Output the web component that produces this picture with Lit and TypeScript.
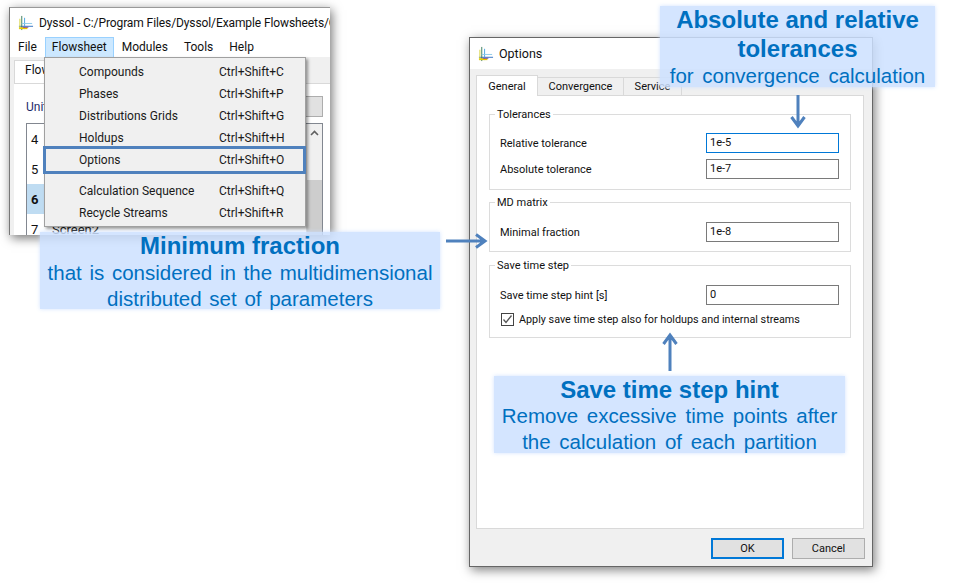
import { LitElement, css, html, svg } from 'lit';
import { customElement } from 'lit/decorators.js';

const appIcon = svg`
  <line x1="1" y1="12" x2="16" y2="12" stroke="#2f6fc0" stroke-width="1"/>
  <line x1="4" y1="1" x2="4" y2="16" stroke="#3a7d5c" stroke-width="1"/>
  <line x1="7" y1="3" x2="7" y2="15" stroke="#4aa3df" stroke-width="1"/>
  <line x1="1" y1="14" x2="10" y2="14" stroke="#e8c800" stroke-width="2"/>
  <line x1="2" y1="4" x2="2" y2="15" stroke="#d8d23a" stroke-width="1"/>
  <line x1="4" y1="9" x2="15" y2="9" stroke="#8ccbe8" stroke-width="1"/>
  <line x1="5" y1="13" x2="11" y2="13" stroke="#7b3fa0" stroke-width="1"/>
`;

const menuItems = [
  { label: 'Compounds', keys: 'Ctrl+Shift+C' },
  { label: 'Phases', keys: 'Ctrl+Shift+P' },
  { label: 'Distributions Grids', keys: 'Ctrl+Shift+G' },
  { label: 'Holdups', keys: 'Ctrl+Shift+H' },
  { label: 'Options', keys: 'Ctrl+Shift+O', marked: true },
  null,
  { label: 'Calculation Sequence', keys: 'Ctrl+Shift+Q' },
  { label: 'Recycle Streams', keys: 'Ctrl+Shift+R' },
];

const rows = [
  { n: '4', text: '' },
  { n: '5', text: '' },
  { n: '6', text: '', active: true },
  { n: '7', text: 'Screen2' },
];

@customElement('main-window')
export class MainWindow extends LitElement {
  static override styles = css`
    :host {
      display: block;
      width: 321px;
      height: 228px;
      background: #fff;
      border-left: 1px solid #777;
      border-top: 1px solid #999;
      box-sizing: border-box;
      box-shadow: 2px 3px 10px rgba(0, 0, 0, 0.55);
      overflow: hidden;
      position: relative;
      font: 12px Roboto, sans-serif;
      color: #111;
    }
    .title {
      height: 29px;
      display: flex;
      align-items: center;
      gap: 5px;
      padding-left: 8px;
      white-space: nowrap;
      overflow: hidden;
      letter-spacing: -0.1px;
    }
    .title svg { flex: none; }
    .menubar {
      display: flex;
      height: 20px;
      align-items: stretch;
      line-height: 20px;
    }
    .menubar span { padding: 0 8px; }
    .menubar .open {
      background: #cce8ff;
      border: 1px solid #99d1ff;
      border-bottom: none;
      padding: 0 6px;
      line-height: 18px;
    }
    .body {
      background: #f0f0f0;
      height: 178px;
      padding: 3px 0 0 4px;
    }
    .tab {
      width: 60px;
      height: 23px;
      background: #fff;
      border: 1px solid #d9d9d9;
      border-bottom: none;
      box-sizing: border-box;
      padding: 2px 0 0 10px;
    }
    .pane {
      background: #fff;
      border-top: 1px solid #d9d9d9;
      height: 160px;
      padding: 12px 7px 0 12px;
      box-sizing: border-box;
    }
    .unit {
      display: flex;
      justify-content: space-between;
      align-items: center;
      height: 21px;
      color: #1c2a6b;
    }
    .unit i {
      display: block;
      width: 16px;
      height: 19px;
      background: #e1e1e1;
      border: 1px solid #adadad;
    }
    .list {
      margin-top: 6px;
      border: 1px solid #828790;
      height: 125px;
      box-sizing: border-box;
      position: relative;
    }
    .row {
      display: flex;
      height: 30px;
      align-items: center;
      font-size: 13px;
    }
    .row b {
      font-weight: 400;
      width: 21px;
      padding-left: 4px;
      box-sizing: border-box;
      height: 100%;
      display: flex;
      align-items: center;
      margin-right: 4px;
    }
    .row.active b { background: #bfdcf2; font-weight: 700; }
    .row:last-of-type span { font-size: 12px; }
    .scroll {
      position: absolute;
      right: 0;
      top: 0;
      bottom: 0;
      width: 16px;
      background: #f0f0f0;
      border-left: 1px solid #dcdcdc;
      display: flex;
      justify-content: center;
      padding-top: 6px;
      box-sizing: border-box;
    }
    .scroll::after {
      content: '';
      position: absolute;
      left: 0;
      right: 0;
      top: 56px;
      bottom: 0;
      background: #cdcdcd;
    }
    .popup {
      position: absolute;
      left: 34px;
      top: 49px;
      width: 262px;
      height: 170px;
      box-sizing: border-box;
      background: #f0f0f0;
      border: 1px solid #a0a0a0;
      box-shadow: 2px 2px 3px rgba(0, 0, 0, 0.4);
      padding-top: 3px;
    }
    .item {
      height: 22px;
      display: flex;
      align-items: center;
      padding-left: 34px;
      position: relative;
      color: #1a1a1a;
    }
    .item span:first-child { width: 140px; }
    .item.marked::after {
      content: '';
      position: absolute;
      inset: -3px -1px -3px -2px;
      border: 3px solid #4f81bd;
    }
    .sep { height: 9px; }
  `;

  protected override render() {
    return html`
      <div class="title">
        <svg width="16" height="16" viewBox="0 0 17 17">${appIcon}</svg>
        <span>Dyssol - C:/Program Files/Dyssol/Example Flowsheets/C</span>
      </div>
      <div class="menubar">
        <span>File</span><span class="open">Flowsheet</span><span>Modules</span><span>Tools</span><span>Help</span>
      </div>
      <div class="body">
        <div class="tab">Flow</div>
        <div class="pane">
          <div class="unit"><span>Unit</span><i></i></div>
          <div class="list">
            ${rows.map(
              (r) => html`<div class="row ${r.active ? 'active' : ''}"><b>${r.n}</b><span>${r.text}</span></div>`
            )}
            <div class="scroll">
              <svg width="9" height="6" viewBox="0 0 9 6"><path d="M1 5L4.5 1.5L8 5" fill="none" stroke="#606060" stroke-width="1.6"/></svg>
            </div>
          </div>
        </div>
      </div>
      <div class="popup">
        ${menuItems.map((m) =>
          m
            ? html`<div class="item ${m.marked ? 'marked' : ''}"><span>${m.label}</span><span>${m.keys}</span></div>`
            : html`<div class="sep"></div>`
        )}
      </div>
    `;
  }
}

@customElement('options-dialog')
export class OptionsDialog extends LitElement {
  static override styles = css`
    :host {
      display: flex;
      flex-direction: column;
      width: 404px;
      height: 530px;
      box-sizing: border-box;
      border: 1px solid #666;
      background: #f0f0f0;
      box-shadow: 2px 3px 10px rgba(0, 0, 0, 0.5);
      font: 11px Roboto, sans-serif;
      color: #111;
    }
    .title {
      height: 31px;
      background: #fff;
      display: flex;
      align-items: center;
      gap: 5px;
      padding-left: 8px;
      font-size: 12.5px;
      flex: none;
    }
    .main {
      flex: 1;
      padding: 6px 8px 0 6px;
      display: flex;
      flex-direction: column;
    }
    .tabs { display: flex; align-items: flex-end; height: 20px; }
    .tabs span {
      height: 18px;
      line-height: 18px;
      text-align: center;
      box-sizing: border-box;
      background: #f0f0f0;
      border: 1px solid #d9d9d9;
      border-bottom: none;
      border-left: none;
    }
    .tabs .on {
      height: 21px;
      width: 62px;
      background: #fff;
      border-left: 1px solid #d9d9d9;
      position: relative;
      top: 1px;
      line-height: 21px;
    }
    .pane {
      height: 434px;
      box-sizing: border-box;
      background: #fff;
      border: 1px solid #d9d9d9;
      padding: 11px 12px 0;
      display: flex;
      flex-direction: column;
      gap: 5px;
    }
    fieldset {
      margin: 0;
      padding: 0 11px 0 10px;
      border: 1px solid #dcdcdc;
      display: flex;
      flex-direction: column;
      box-sizing: border-box;
    }
    legend {
      padding: 0 2px;
      margin-left: -5px;
      line-height: 14px;
    }
    legend span { position: relative; top: 1px; }
    .field {
      display: flex;
      justify-content: space-between;
      align-items: center;
      height: 20px;
      margin-bottom: 6px;
    }
    .first { margin-top: 12px; }
    .lower { margin-top: 13px; }
    .box {
      width: 133px;
      height: 20px;
      box-sizing: border-box;
      border: 1px solid #7a7a7a;
      background: #fff;
      padding-left: 3px;
      line-height: 18px;
    }
    .box.focus { border-color: #0078d7; }
    .check {
      display: flex;
      align-items: center;
      gap: 5px;
      height: 16px;
      padding-left: 1px;
      font-size: 10.8px;
    }
    .tick {
      width: 13px;
      height: 13px;
      box-sizing: border-box;
      border: 1px solid #444;
      background: #fff;
      display: flex;
    }
    .actions {
      display: flex;
      justify-content: flex-end;
      gap: 8px;
      padding-top: 9px;
      margin-right: -1px;
    }
    button {
      width: 73px;
      height: 21px;
      box-sizing: border-box;
      background: #e1e1e1;
      border: 1px solid #adadad;
      padding: 0;
      font: 11px Roboto, sans-serif;
      color: #111;
    }
    button.primary { border: 2px solid #0078d7; }
  `;

  protected override render() {
    return html`
      <div class="title">
        <svg width="16" height="16" viewBox="0 0 17 17">${appIcon}</svg>
        <span>Options</span>
      </div>
      <div class="main">
        <div class="tabs">
          <span class="on">General</span>
          <span style="width:86px">Convergence</span>
          <span style="width:58px">Service</span>
        </div>
        <div class="pane">
          <fieldset style="height:83px">
            <legend><span>Tolerances</span></legend>
            <div class="field first"><span>Relative tolerance</span><div class="box focus">1e-5</div></div>
            <div class="field"><span>Absolute tolerance</span><div class="box">1e-7</div></div>
          </fieldset>
          <fieldset style="height:57px">
            <legend><span>MD matrix</span></legend>
            <div class="field lower"><span>Minimal fraction</span><div class="box">1e-8</div></div>
          </fieldset>
          <fieldset style="height:80px;margin-top:1px">
            <legend><span>Save time step</span></legend>
            <div class="field lower"><span>Save time step hint [s]</span><div class="box">0</div></div>
            <div class="check">
              <span class="tick">
                <svg width="11" height="11" viewBox="0 0 11 11"><path d="M1.5 5.5 L4 8.5 L9.5 1.5" fill="none" stroke="#555" stroke-width="1.3"/></svg>
              </span>
              <span>Apply save time step also for holdups and internal streams</span>
            </div>
          </fieldset>
        </div>
        <div class="actions">
          <button class="primary">OK</button>
          <button>Cancel</button>
        </div>
      </div>
    `;
  }
}

@customElement('app-root')
export class AppRoot extends LitElement {
  static override styles = css`
    :host {
      display: block;
      position: relative;
      width: 960px;
      height: 583px;
      background: #fff;
      overflow: hidden;
      font-family: 'Liberation Sans', Arial, sans-serif;
    }
    main-window { position: absolute; left: 9px; top: 7px; }
    options-dialog { position: absolute; left: 469px; top: 37px; }
    .note {
      position: absolute;
      box-sizing: border-box;
      background: rgba(204, 224, 255, 0.85);
      box-shadow: 0 0 4px rgba(204, 224, 255, 0.9);
      color: #0070c0;
      text-align: center;
      font-size: 20.5px;
      line-height: 26px;
      word-spacing: 2px;
    }
    .note b {
      display: block;
      font-size: 24px;
      line-height: 28px;
      word-spacing: 0;
    }
    .top { left: 660px; top: 6px; width: 275px; height: 81px; word-spacing: 3px; }
    .top b { line-height: 28.5px; }
    .mid { left: 40px; top: 232px; width: 400px; height: 77px; }
    .bot { left: 494px; top: 376px; width: 351px; height: 77px; word-spacing: 3px; }
    .bot b { line-height: 27px; }
    .arrow { position: absolute; overflow: visible; }
  `;

  protected override render() {
    return html`
      <main-window></main-window>
      <options-dialog></options-dialog>
      <div class="note top"><b>Absolute and relative tolerances</b>for convergence calculation</div>
      <div class="note mid"><b>Minimum fraction</b>that is considered in the multidimensional<br />distributed set of parameters</div>
      <div class="note bot"><b>Save time step hint</b>Remove excessive time points after<br />the calculation of each partition</div>
      <svg class="arrow" style="left:790px;top:95px" width="16" height="34" viewBox="0 0 16 34">
        <path d="M8 0V31M1.5 22L8 31L14.5 22" fill="none" stroke="#4f81bd" stroke-width="3"/>
      </svg>
      <svg class="arrow" style="left:446px;top:233px" width="42" height="16" viewBox="0 0 42 16">
        <path d="M0 8H39M30 1.5L39 8L30 14.5" fill="none" stroke="#4f81bd" stroke-width="3"/>
      </svg>
      <svg class="arrow" style="left:662px;top:333px" width="16" height="38" viewBox="0 0 16 38">
        <path d="M8 38V2M1.5 11L8 2L14.5 11" fill="none" stroke="#4f81bd" stroke-width="3"/>
      </svg>
    `;
  }
}
